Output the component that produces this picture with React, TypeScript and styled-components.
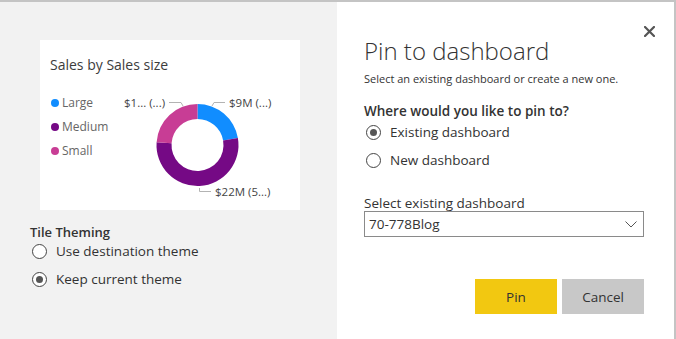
import React from "react";
import styled, { createGlobalStyle } from "styled-components";

const Global = createGlobalStyle`
  html, body { margin: 0; padding: 0; background: #ffffff; }
  body { font-family: "Open Sans", "Noto Sans", sans-serif; color: #333; }
  * { box-sizing: border-box; }
`;

const Frame = styled.div`
  width: 676px;
  height: 339px;
  display: flex;
  border-top: 2px solid #c4c4c4;
  border-right: 2px solid #c4c4c4;
  overflow: hidden;
`;

const LeftPanel = styled.div`
  width: 337px;
  flex: none;
  background: #f2f2f2;
  padding: 38px 0 0 30px;
  display: flex;
  flex-direction: column;
`;

const Card = styled.div`
  width: 260px;
  height: 170px;
  margin-left: 10px;
  background: #ffffff;
  display: flex;
  flex-direction: column;
`;

const CardTitle = styled.div`
  font-size: 14px;
  color: #3c3c3c;
  padding: 15px 0 0 10px;
  line-height: 20px;
`;

const CardBody = styled.div`
  display: flex;
  padding-top: 13px;
`;

const Legend = styled.div`
  display: flex;
  flex-direction: column;
  gap: 6px;
  padding: 6px 0 0 11px;
  width: 60px;
`;

const LegendItem = styled.div`
  display: flex;
  align-items: center;
  gap: 3px;
  font-size: 12px;
  color: #666;
  line-height: 18px;
  white-space: nowrap;
`;

const Dot = styled.span<{ $c: string }>`
  width: 8px;
  height: 8px;
  border-radius: 50%;
  background: ${(p) => p.$c};
  flex: none;
`;

const ChartSvg = styled.svg`
  display: block;
  flex: none;
`;

const Section = styled.div<{ $top: number }>`
  display: flex;
  flex-direction: column;
  margin-top: ${(p) => p.$top}px;
`;

const SectionTitle = styled.div<{ $size?: number }>`
  font-weight: 600;
  font-size: ${(p) => p.$size ?? 13}px;
  color: #333;
  line-height: 16px;
`;

const RadioList = styled.div<{ $top?: number }>`
  display: flex;
  flex-direction: column;
  gap: 6px;
  margin-top: ${(p) => p.$top ?? 0}px;
`;

const RadioRow = styled.label`
  display: flex;
  align-items: center;
  gap: 9px;
  height: 22px;
  font-size: 13.5px;
  color: #333;
  padding-left: 2px;
`;

const RadioCircle = styled.span<{ $checked?: boolean }>`
  width: 15px;
  height: 15px;
  border-radius: 50%;
  border: 1.6px solid #444;
  background: #fff;
  display: flex;
  align-items: center;
  justify-content: center;
  flex: none;
  &::after {
    content: "";
    width: 7px;
    height: 7px;
    border-radius: 50%;
    background: ${(p) => (p.$checked ? "#555" : "transparent")};
  }
`;

const RightPanel = styled.div`
  flex: 1;
  background: #fff;
  position: relative;
  padding: 32px 0 0 27px;
  display: flex;
  flex-direction: column;
`;

const CloseButton = styled.button`
  position: absolute;
  top: 20px;
  right: 16px;
  width: 18px;
  height: 18px;
  border: none;
  background: transparent;
  padding: 0;
  display: flex;
  align-items: center;
  justify-content: center;
  cursor: pointer;
`;

const Title = styled.h1`
  margin: 0;
  font-weight: 300;
  font-size: 24px;
  line-height: 34px;
  color: #333;
`;

const Subtitle = styled.div`
  font-size: 11px;
  color: #333;
  margin-top: 3px;
  line-height: 16px;
`;

const FieldLabel = styled.div`
  font-size: 13.5px;
  color: #333;
  margin-top: 24px;
  line-height: 16px;
`;

const Select = styled.div`
  width: 280px;
  height: 26px;
  border: 1px solid #8a8a8a;
  display: flex;
  align-items: center;
  justify-content: space-between;
  padding: 0 6px 0 4px;
  font-size: 13.5px;
  color: #333;
`;

const Buttons = styled.div`
  display: flex;
  gap: 5px;
  margin: 42px 0 0 111px;
`;

const Button = styled.button<{ $primary?: boolean }>`
  width: 82px;
  height: 35px;
  border: none;
  font-family: inherit;
  font-size: 13.5px;
  color: #333;
  background: ${(p) => (p.$primary ? "#f2c811" : "#c8c8c8")};
  cursor: pointer;
`;

function arc(cx: number, cy: number, ro: number, ri: number, a0: number, a1: number) {
  const rad = (a: number) => ((a - 90) * Math.PI) / 180;
  const p = (r: number, a: number) => [cx + r * Math.cos(rad(a)), cy + r * Math.sin(rad(a))];
  const large = a1 - a0 > 180 ? 1 : 0;
  const [x0, y0] = p(ro, a0);
  const [x1, y1] = p(ro, a1);
  const [x2, y2] = p(ri, a1);
  const [x3, y3] = p(ri, a0);
  return `M${x0} ${y0} A${ro} ${ro} 0 ${large} 1 ${x1} ${y1} L${x2} ${y2} A${ri} ${ri} 0 ${large} 0 ${x3} ${y3} Z`;
}

const Donut = () => {
  const cx = 97.5;
  const cy = 57;
  return (
    <ChartSvg width={190} height={120} viewBox="0 0 190 120">
      <path d={arc(cx, cy, 41, 26, 0, 80)} fill="#118dff" />
      <path d={arc(cx, cy, 41, 26, 80, 274)} fill="#750985" />
      <path d={arc(cx, cy, 41, 26, 274, 360)} fill="#c83d95" />
      <g fill="none" stroke="#b3b3b3" strokeWidth={1}>
        <polyline points="69,14.5 81,14.5 83,18" />
        <polyline points="112,18 114,14.5 125,14.5" />
        <polyline points="99.5,100 99.5,103.5 111,103.5" />
      </g>
      <g fontFamily='"Open Sans", sans-serif' fontSize={11.5} fill="#444">
        <text x={24} y={19}>$1... (...)</text>
        <text x={129} y={19}>$9M (...)</text>
        <text x={115} y={108}>$22M (5...)</text>
      </g>
    </ChartSvg>
  );
};

export default function App() {
  return (
    <>
      <Global />
      <Frame>
        <LeftPanel>
          <Card>
            <CardTitle>Sales by Sales size</CardTitle>
            <CardBody>
              <Legend>
                <LegendItem><Dot $c="#118dff" />Large</LegendItem>
                <LegendItem><Dot $c="#750985" />Medium</LegendItem>
                <LegendItem><Dot $c="#c83d95" />Small</LegendItem>
              </Legend>
              <Donut />
            </CardBody>
          </Card>
          <Section $top={14}>
            <SectionTitle>Tile Theming</SectionTitle>
            <RadioList>
              <RadioRow><RadioCircle />Use destination theme</RadioRow>
              <RadioRow><RadioCircle $checked />Keep current theme</RadioRow>
            </RadioList>
          </Section>
        </LeftPanel>
        <RightPanel>
          <CloseButton aria-label="Close">
            <svg width="11" height="11" viewBox="0 0 11 11">
              <path d="M1 1 L10 10 M10 1 L1 10" stroke="#555" strokeWidth="2.2" strokeLinecap="square" />
            </svg>
          </CloseButton>
          <Title>Pin to dashboard</Title>
          <Subtitle>Select an existing dashboard or create a new one.</Subtitle>
          <Section $top={16}>
            <SectionTitle $size={13.5}>Where would you like to pin to?</SectionTitle>
            <RadioList $top={2}>
              <RadioRow><RadioCircle $checked />Existing dashboard</RadioRow>
              <RadioRow><RadioCircle />New dashboard</RadioRow>
            </RadioList>
          </Section>
          <FieldLabel>Select existing dashboard</FieldLabel>
          <Select>
            <span>70-778Blog</span>
            <svg width="12" height="7" viewBox="0 0 12 7">
              <path d="M0.5 0.5 L6 6 L11.5 0.5" fill="none" stroke="#555" strokeWidth="1" />
            </svg>
          </Select>
          <Buttons>
            <Button $primary>Pin</Button>
            <Button>Cancel</Button>
          </Buttons>
        </RightPanel>
      </Frame>
    </>
  );
}
